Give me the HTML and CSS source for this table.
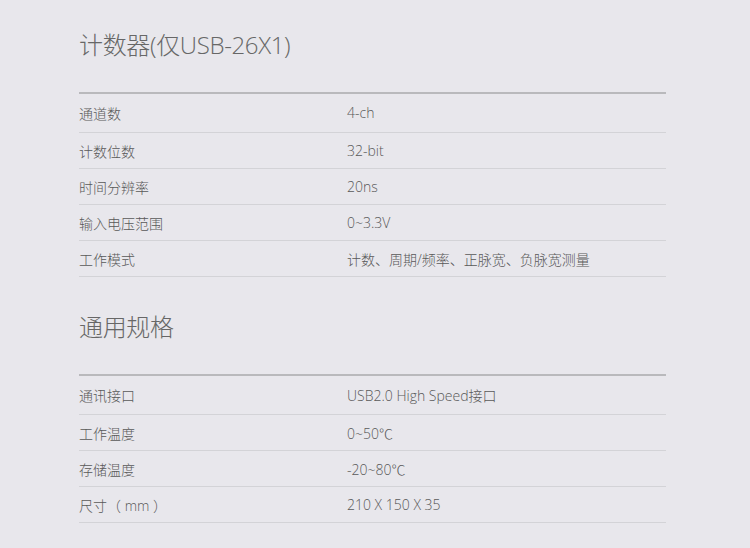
FILE: index.html
```html
<!DOCTYPE html>
<html lang="zh-CN">
<head>
<meta charset="utf-8">
<title>规格</title>
<link rel="stylesheet" href="styles.css">
</head>
<body>
<main class="page">
  <section class="spec">
    <h2 class="spec-title">计数器(仅USB-26X1)</h2>
    <div class="spec-table">
      <div class="row"><span class="k">通道数</span><span class="v">4-ch</span></div>
      <div class="row"><span class="k">计数位数</span><span class="v">32-bit</span></div>
      <div class="row"><span class="k">时间分辨率</span><span class="v">20ns</span></div>
      <div class="row"><span class="k">输入电压范围</span><span class="v">0~3.3V</span></div>
      <div class="row"><span class="k">工作模式</span><span class="v">计数、周期/频率、正脉宽、负脉宽测量</span></div>
    </div>
  </section>
  <section class="spec">
    <h2 class="spec-title">通用规格</h2>
    <div class="spec-table">
      <div class="row"><span class="k">通讯接口</span><span class="v">USB2.0 High Speed接口</span></div>
      <div class="row"><span class="k">工作温度</span><span class="v">0~50℃</span></div>
      <div class="row"><span class="k">存储温度</span><span class="v">-20~80℃</span></div>
      <div class="row"><span class="k">尺寸（ mm ）</span><span class="v">210 X 150 X 35</span></div>
    </div>
  </section>
</main>
</body>
</html>
```
FILE: styles.css
```css
html, body {
  margin: 0;
  padding: 0;
  background: #e8e7ec;
}
body {
  font-family: "Open Sans", "Noto Sans CJK SC", sans-serif;
  font-weight: 300;
  color: #595959;
}
.page {
  width: 587px;
  padding: 29px 0 0 79px;
  display: flex;
  flex-direction: column;
  gap: 34px;
}
.spec-title {
  margin: 0 0 31px 0;
  font-size: 24px;
  line-height: 32px;
  font-weight: 300;
  letter-spacing: -0.35px;
  color: #676767;
}
.spec-table {
  border-top: 2px solid #b9b9bc;
}
.row {
  display: grid;
  grid-template-columns: 268px 1fr;
  height: 35px;
  align-items: center;
  font-size: 14px;
  border-bottom: 1px solid #d3d3d7;
}
.row:first-child {
  height: 39px;
  padding-bottom: 1px;
  box-sizing: border-box;
}
.k {
  white-space: pre;
}
```
